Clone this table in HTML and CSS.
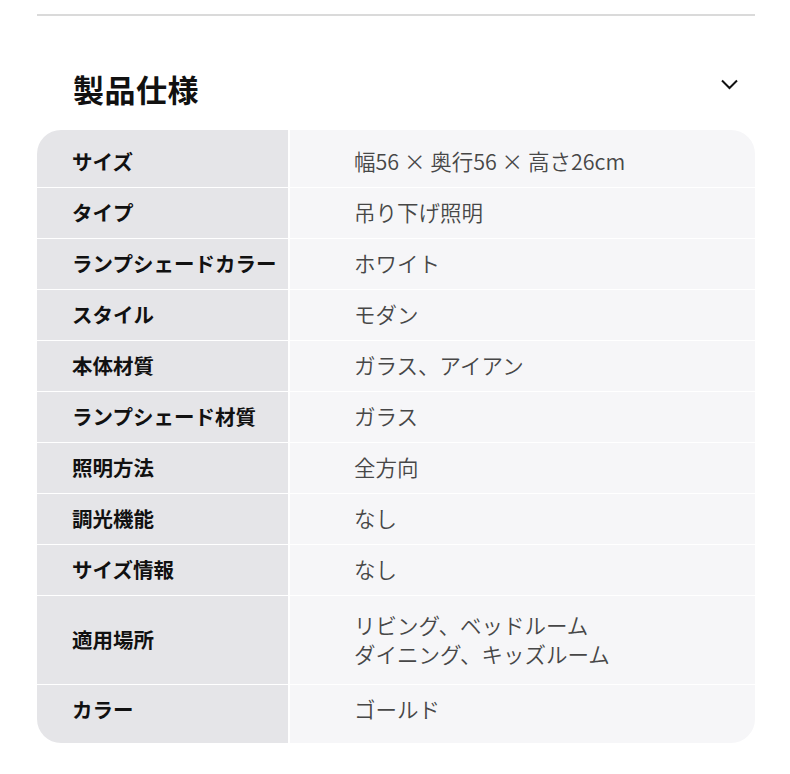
FILE: index.html
```html
<!DOCTYPE html>
<html lang="ja">
<head>
<meta charset="utf-8">
<title>製品仕様</title>
<link rel="stylesheet" href="styles.css">
</head>
<body>
<div class="page">
  <hr class="divider">
  <div class="head">
    <h2 class="title">製品仕様</h2>
    <svg class="chev" width="17" height="11" viewBox="0 0 17 11"><path d="M1 1.5 L8.5 9 L16 1.5" fill="none" stroke="#111" stroke-width="2"/></svg>
  </div>
  <div class="spec">
    <div class="row first"><div class="k">サイズ</div><div class="v">幅56 × 奥行56 × 高さ26cm</div></div>
    <div class="row"><div class="k">タイプ</div><div class="v">吊り下げ照明</div></div>
    <div class="row"><div class="k">ランプシェードカラー</div><div class="v">ホワイト</div></div>
    <div class="row"><div class="k">スタイル</div><div class="v">モダン</div></div>
    <div class="row"><div class="k">本体材質</div><div class="v">ガラス、アイアン</div></div>
    <div class="row"><div class="k">ランプシェード材質</div><div class="v">ガラス</div></div>
    <div class="row"><div class="k">照明方法</div><div class="v">全方向</div></div>
    <div class="row"><div class="k">調光機能</div><div class="v">なし</div></div>
    <div class="row"><div class="k">サイズ情報</div><div class="v">なし</div></div>
    <div class="row tall"><div class="k">適用場所</div><div class="v">リビング、ベッドルーム<br>ダイニング、キッズルーム</div></div>
    <div class="row last"><div class="k">カラー</div><div class="v">ゴールド</div></div>
  </div>
</div>
</body>
</html>
```
FILE: styles.css
```css
* { box-sizing: border-box; }
html, body { margin: 0; padding: 0; background: #fff; }
body { font-family: "Noto Sans CJK JP", "Noto Sans", sans-serif; color: #111; }
.page { padding: 14px 35px 0 37px; }
.divider { margin: 0; border: 0; height: 2px; background: #dadada; }
.head {
  display: flex; align-items: center; justify-content: space-between;
  height: 114px; padding: 32px 17px 0 36px;
}
.title { margin: 0; font-size: 31px; font-weight: 700; letter-spacing: 0.5px; line-height: 40px; }
.chev { display: block; margin-top: -10px; }
.spec { background: #fff; border-radius: 24px; overflow: hidden; }
.row { display: grid; grid-template-columns: 251px 1fr; column-gap: 2px; }
.row + .row { margin-top: 1px; }
.k, .v { padding: 10px 0 12px; line-height: 28px; display: flex; flex-direction: column; justify-content: center; }
.k { background: #e5e5e8; padding-left: 35px; font-size: 20.5px; font-weight: 700; color: #111; }
.v { background: #f6f6f8; padding-left: 64px; font-size: 21.5px; color: #474747; font-weight: 350; }
.row.first .k, .row.first .v { padding-top: 17px; }
.row.tall .k, .row.tall .v { padding-top: 14px; padding-bottom: 16px; line-height: 29px; }
.row.last .k, .row.last .v { padding-bottom: 20px; }
```
